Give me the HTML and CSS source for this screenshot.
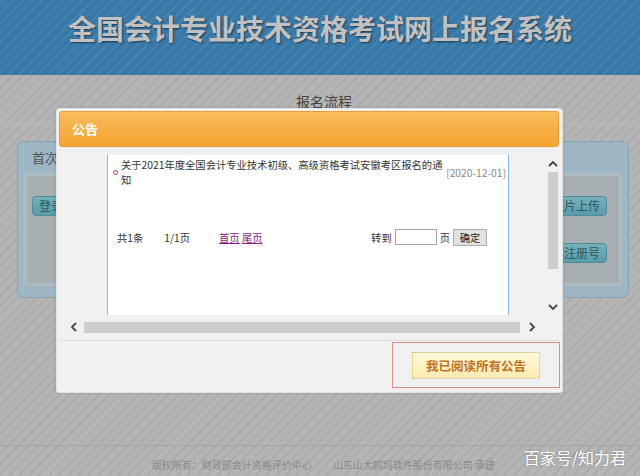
FILE: index.html
```html
<!DOCTYPE html>
<html lang="zh-CN">
<head>
<meta charset="utf-8">
<title>全国会计专业技术资格考试网上报名系统</title>
<link rel="stylesheet" href="styles.css">
</head>
<body>
<header class="site-header">
  <h1 class="site-title">全国会计专业技术资格考试网上报名系统</h1>
</header>
<main class="site-main">
  <div class="flow-title">报名流程</div>
  <section class="flow-panel">
    <div class="flow-panel-head">首次报名</div>
    <div class="flow-panel-body">
      <div class="flow-row">
        <span class="flow-btn">登录报名</span>
        <span class="flow-btn">照片上传</span>
      </div>
      <div class="flow-row flow-row-end">
        <span class="flow-btn">报名注册号</span>
      </div>
    </div>
  </section>
</main>
<footer class="site-footer">
  <span>版权所有：财政部会计资格评价中心</span>
  <span>山东山大鸥玛软件股份有限公司 承建</span>
</footer>
<div class="mask"></div>
<div class="dialog">
  <div class="dialog-head">公告</div>
  <div class="dialog-body">
    <div class="scroll-view">
      <div class="scroll-content">
        <div class="notice-box">
          <div class="notice-item">
            <span class="bullet"></span>
            <span class="notice-text">关于2021年度全国会计专业技术初级、高级资格考试安徽考区报名的通知</span>
            <span class="notice-date">[2020-12-01]</span>
          </div>
          <div class="pager">
            <span>共1条</span>
            <span class="pager-pages">1/1页</span>
            <span class="pager-links"><a href="#">首页</a> <a href="#">尾页</a></span>
            <span class="pager-goto"><span>转到</span><input class="pager-input" type="text"><span>页</span><button class="pager-btn" type="button">确定</button></span>
          </div>
        </div>
      </div>
      <div class="vscroll">
        <span class="arrow"><svg width="10" height="7" viewBox="0 0 10 7"><polyline points="1,6 5,2 9,6" fill="none" stroke="#444" stroke-width="1.8"/></svg></span>
        <span class="vthumb"></span>
        <span class="vspace"></span>
        <span class="arrow"><svg width="10" height="7" viewBox="0 0 10 7"><polyline points="1,1 5,5 9,1" fill="none" stroke="#444" stroke-width="1.8"/></svg></span>
      </div>
      <div class="hscroll">
        <span class="harrow harrow-left"><svg width="7" height="10" viewBox="0 0 7 10"><polyline points="6,1 2,5 6,9" fill="none" stroke="#444" stroke-width="1.8"/></svg></span>
        <span class="hthumb"></span>
        <span class="harrow harrow-right"><svg width="7" height="10" viewBox="0 0 7 10"><polyline points="1,1 5,5 1,9" fill="none" stroke="#444" stroke-width="1.8"/></svg></span>
      </div>
      <div class="corner"></div>
    </div>
  </div>
  <div class="dialog-foot">
    <div class="confirm-frame"><button class="confirm-btn" type="button">我已阅读所有公告</button></div>
  </div>
</div>
<div class="watermark">百家号/知力君</div>
</body>
</html>
```
FILE: styles.css
```css
* { box-sizing: border-box; }
html, body { margin: 0; padding: 0; }
body {
  width: 640px;
  height: 476px;
  overflow: hidden;
  position: relative;
  font-family: "Noto Sans CJK SC", "Noto Sans", sans-serif;
  background: repeating-linear-gradient(-45deg, #e3e3e3 0 5px, #d7d7d7 5px 7px);
}

/* ---------- page behind the mask ---------- */
.site-header {
  height: 75px;
  padding-top: 9px;
  text-align: center;
  background: repeating-linear-gradient(-45deg, #4898d3 0 5px, #56a3dc 5px 7px);
}
.site-title {
  margin: 0;
  font-size: 28px;
  line-height: 38px;
  font-weight: 700;
  color: #f2f2f2;
  text-shadow: 1px 1px 2px rgba(0, 0, 0, 0.55);
}
.site-main {
  height: 370px;
}
.flow-title {
  height: 50px;
  padding: 18px 0 0 8px;
  font-size: 14px;
  line-height: 16px;
  text-align: center;
  color: #555;
  border-bottom: 1px solid #ececec;
}
.flow-panel {
  margin: 16px 11px 0 17px;
  background: #c4e4f5;
  border: 1px solid #aacbdc;
  border-radius: 6px;
}
.flow-panel-head {
  height: 31px;
  line-height: 31px;
  padding-left: 14px;
  font-size: 13px;
  color: #666;
}
.flow-panel-body {
  height: 113px;
  margin: 0 6px 11px 6px;
  padding: 20px 12px 0 5px;
  border: 3px solid #dbeaf2;
  border-radius: 3px;
  background: #d2dbe0;
}
.flow-row {
  display: flex;
  justify-content: space-between;
}
.flow-row + .flow-row { margin-top: 27px; }
.flow-row-end { justify-content: flex-end; }
.flow-btn {
  height: 20px;
  line-height: 18px;
  padding: 0 6px;
  font-size: 12px;
  color: #3a6f7b;
  background: linear-gradient(#93dde9, #6cc5d5);
  border: 1px solid #6aaebb;
  border-radius: 4px;
}
.site-footer {
  height: 31px;
  padding: 12px 0 0 7px;
  border-top: 1px solid #cdcdcd;
  display: flex;
  justify-content: center;
  gap: 21px;
  font-size: 10px;
  line-height: 14px;
  color: #adadad;
}

/* ---------- modal ---------- */
.mask {
  position: absolute;
  inset: 0;
  background: rgba(0, 0, 0, 0.2);
}
.dialog {
  position: absolute;
  left: 56px;
  top: 108px;
  width: 507px;
  height: 285px;
  padding: 2px 3px 0 2px;
  background: #f0f0f0;
  border: 1px solid #e4e4e4;
  border-radius: 3px;
  box-shadow: 0 0 3px rgba(0, 0, 0, 0.15);
}
.dialog-head {
  height: 36px;
  line-height: 34px;
  padding-left: 12px;
  font-size: 13px;
  font-weight: 700;
  color: #fff;
  background: linear-gradient(#f8bd5c, #f6b049 45%, #f4a42e);
  border: 1px solid #e99c31;
  border-radius: 3px;
}
.dialog-body {
  padding: 8px 0 0 4px;
}
.scroll-view {
  display: grid;
  grid-template-columns: 484px 12px;
  grid-template-rows: 166px 12px;
  background: #f0f0f0;
}
.scroll-content {
  overflow: hidden;
}
.notice-box {
  width: 402px;
  height: 160px;
  margin-left: 44px;
  background: #fff;
  border-left: 1px solid #8db6e2;
  border-right: 1px solid #8db6e2;
  font-size: 10.3px;
  color: #333;
}
.notice-item {
  display: flex;
  align-items: center;
  padding: 2px 2px 0 5px;
}
.bullet {
  width: 5px;
  height: 5px;
  border: 1px solid #c8383a;
  border-radius: 50%;
}
.notice-text {
  width: 325px;
  margin-left: 3px;
  line-height: 15px;
}
.notice-date {
  margin-left: auto;
  color: #8a8a8a;
}
.pager {
  display: flex;
  align-items: center;
  height: 18px;
  margin-top: 41px;
  padding: 0 21px 0 9px;
}
.pager-pages { margin-left: 21px; }
.pager-links { margin-left: 29px; }
.pager-links a { color: #8b1a8b; }
.pager-goto {
  display: flex;
  align-items: center;
  gap: 3px;
  margin-left: auto;
}
.pager-input {
  width: 42px;
  height: 16px;
  padding: 0;
  border: 1px solid #a5a5a5;
  background: #fff;
}
.pager-btn {
  width: 34px;
  height: 17px;
  padding: 0;
  font: inherit;
  color: #222;
  background: #e1e1e1;
  border: 1px solid #adadad;
}
.vscroll {
  display: flex;
  flex-direction: column;
  padding-bottom: 6px;
}
.arrow {
  height: 16px;
  display: flex;
  align-items: center;
  justify-content: center;
}
.vthumb {
  height: 97px;
  margin: 1px 1px 0 1px;
  background: #cdcdcd;
}
.vspace { flex: 1; }
.hscroll {
  display: flex;
  align-items: stretch;
}
.harrow {
  display: flex;
  align-items: center;
  justify-content: center;
}
.harrow-left { width: 21px; }
.harrow-right { width: 24px; }
.hthumb {
  width: 436px;
  margin-top: 1px;
  background: #cdcdcd;
}
.dialog-foot {
  display: flex;
  justify-content: flex-end;
  margin: 7px -1px 0 0;
  padding-top: 1px;
  border-top: 1px solid #dedede;
}
.confirm-frame {
  width: 168px;
  height: 46px;
  display: flex;
  align-items: center;
  justify-content: center;
  border: 1px solid #e28b8b;
}
.confirm-btn {
  width: 128px;
  height: 27px;
  padding: 0;
  font-family: inherit;
  font-size: 12.5px;
  font-weight: 700;
  color: #c4701f;
  background: linear-gradient(#fff8dc, #fcebb0);
  border: 1px dotted #d9b64a;
}
.watermark {
  position: absolute;
  right: 14px;
  top: 447px;
  font-size: 16px;
  line-height: 20px;
  color: #fff;
  text-shadow: 0 0 2px rgba(0, 0, 0, 0.3);
}
```
